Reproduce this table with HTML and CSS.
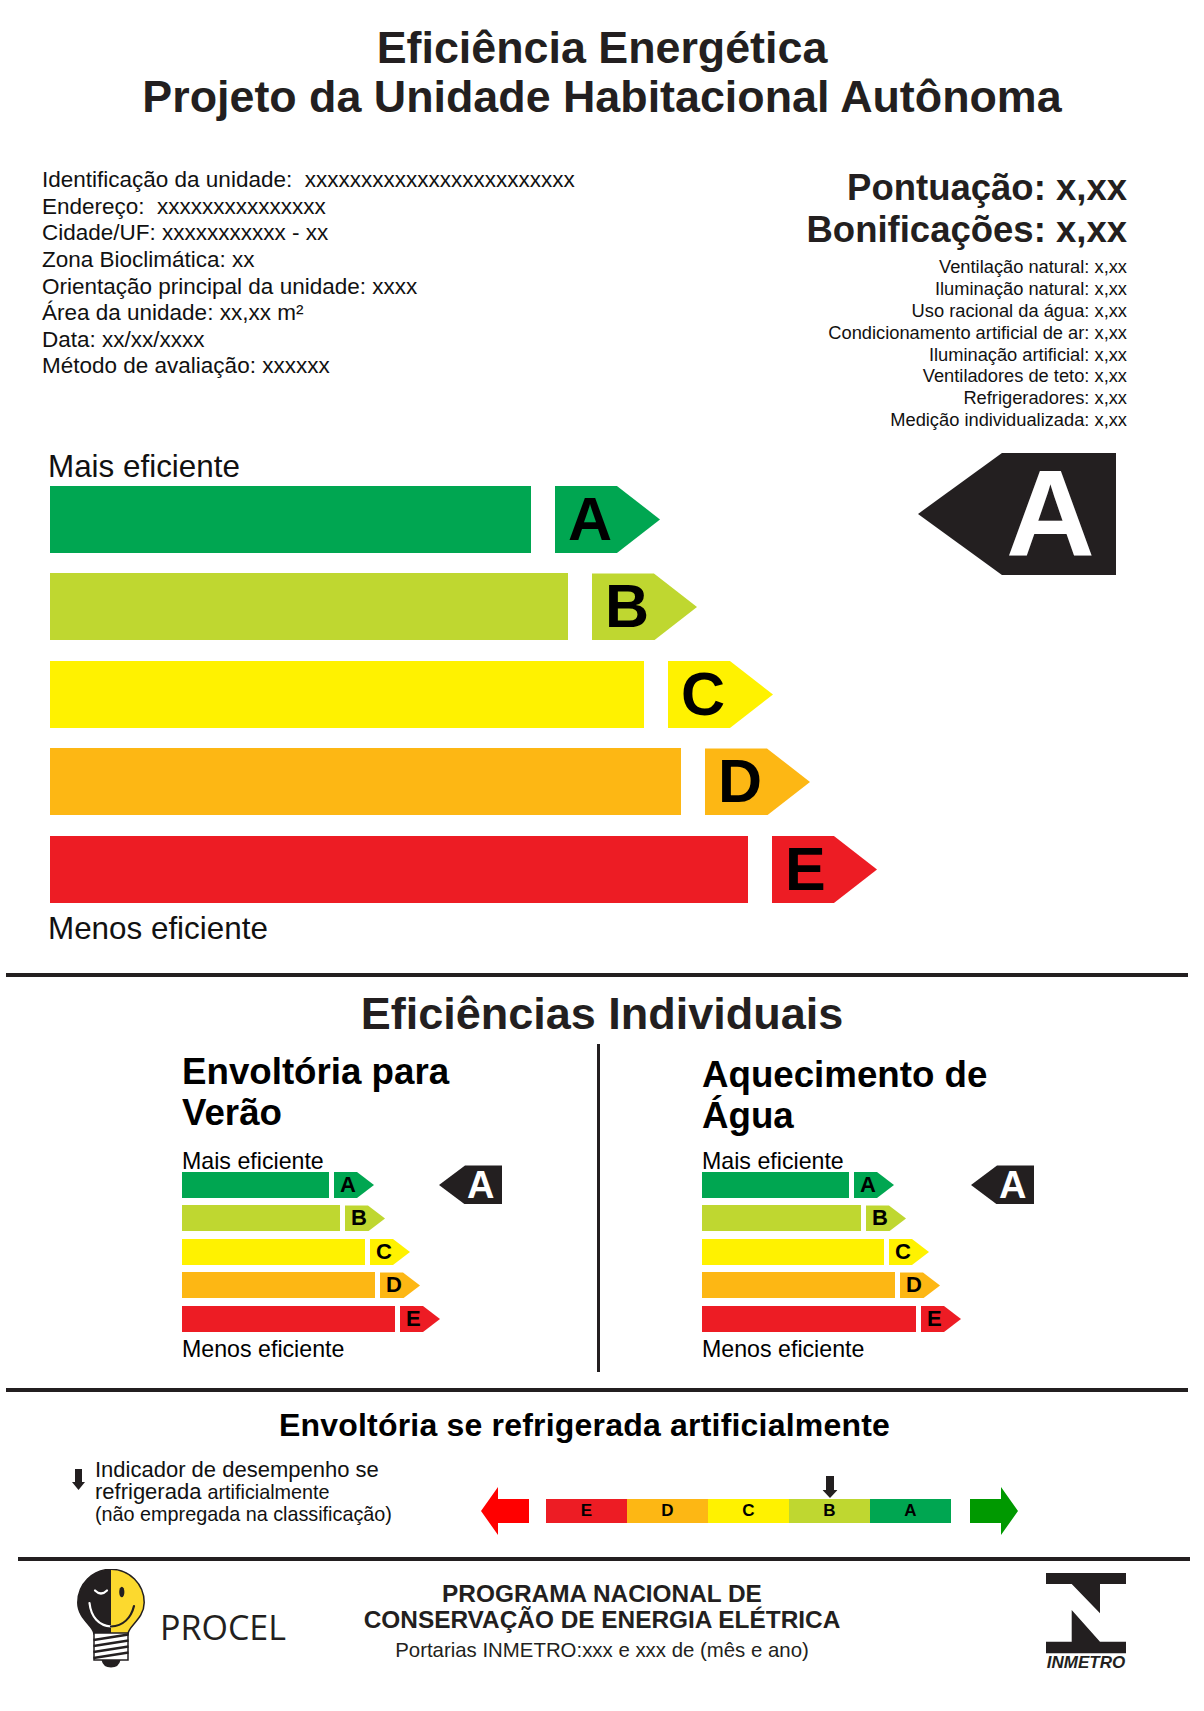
FILE: index.html
```html
<!DOCTYPE html>
<html lang="pt-BR">
<head>
<meta charset="utf-8">
<title>Eficiência Energética</title>
<link rel="stylesheet" href="styles.css">
</head>
<body>
<div class="page">
  <h1 class="title">Eficiência Energética<br>Projeto da Unidade Habitacional Autônoma</h1>

  <section class="info">
    <div class="info-left">
      <div>Identificação da unidade:&nbsp; xxxxxxxxxxxxxxxxxxxxxxxx</div>
      <div>Endereço:&nbsp; xxxxxxxxxxxxxxx</div>
      <div>Cidade/UF: xxxxxxxxxxx - xx</div>
      <div>Zona Bioclimática: xx</div>
      <div>Orientação principal da unidade: xxxx</div>
      <div>Área da unidade: xx,xx m²</div>
      <div>Data: xx/xx/xxxx</div>
      <div>Método de avaliação: xxxxxx</div>
    </div>
    <div class="info-right">
      <div class="score">Pontuação: x,xx</div>
      <div class="score">Bonificações: x,xx</div>
      <div class="bonus">
        <div>Ventilação natural: x,xx</div>
        <div>Iluminação natural: x,xx</div>
        <div>Uso racional da água: x,xx</div>
        <div>Condicionamento artificial de ar: x,xx</div>
        <div>Iluminação artificial: x,xx</div>
        <div>Ventiladores de teto: x,xx</div>
        <div>Refrigeradores: x,xx</div>
        <div>Medição individualizada: x,xx</div>
      </div>
    </div>
  </section>

  <section class="main">
    <div class="scale">
      <div class="label-big">Mais eficiente</div>
      <div class="rows">
        <div class="row"><div class="bar g-a" style="width:481px"></div><div class="arrow g-a">A</div></div>
        <div class="row"><div class="bar g-b" style="width:518px"></div><div class="arrow g-b">B</div></div>
        <div class="row"><div class="bar g-c" style="width:594px"></div><div class="arrow g-c">C</div></div>
        <div class="row"><div class="bar g-d" style="width:631px"></div><div class="arrow g-d">D</div></div>
        <div class="row"><div class="bar g-e" style="width:698px"></div><div class="arrow g-e">E</div></div>
      </div>
      <div class="label-big label-bottom">Menos eficiente</div>
    </div>
    <div class="badge">A</div>
  </section>

  <div class="sep sep-1"></div>

  <section class="individual">
    <h2 class="section-title">Eficiências Individuais</h2>
    <div class="cols">
      <div class="col col-left">
        <h3 class="col-title">Envoltória para<br>Verão</h3>
        <div class="label-small label-top-l">Mais eficiente</div>
        <div class="srows">
          <div class="srow"><div class="sbar g-a" style="width:147px"></div><div class="sarrow g-a">A</div><div class="sbadge sbadge-l">A</div></div>
          <div class="srow"><div class="sbar g-b" style="width:158px"></div><div class="sarrow g-b">B</div></div>
          <div class="srow"><div class="sbar g-c" style="width:183px"></div><div class="sarrow g-c">C</div></div>
          <div class="srow"><div class="sbar g-d" style="width:193px"></div><div class="sarrow g-d">D</div></div>
          <div class="srow"><div class="sbar g-e" style="width:213px"></div><div class="sarrow g-e">E</div></div>
        </div>
        <div class="label-small label-bottom-s">Menos eficiente</div>
      </div>
      <div class="divider"></div>
      <div class="col col-right">
        <h3 class="col-title">Aquecimento de<br>Água</h3>
        <div class="label-small label-top-r">Mais eficiente</div>
        <div class="srows">
          <div class="srow"><div class="sbar g-a" style="width:147px"></div><div class="sarrow g-a">A</div><div class="sbadge sbadge-r">A</div></div>
          <div class="srow"><div class="sbar g-b" style="width:159px"></div><div class="sarrow g-b">B</div></div>
          <div class="srow"><div class="sbar g-c" style="width:182px"></div><div class="sarrow g-c">C</div></div>
          <div class="srow"><div class="sbar g-d" style="width:193px"></div><div class="sarrow g-d">D</div></div>
          <div class="srow"><div class="sbar g-e" style="width:214px"></div><div class="sarrow g-e">E</div></div>
        </div>
        <div class="label-small label-bottom-s">Menos eficiente</div>
      </div>
    </div>
  </section>

  <div class="sep sep-2"></div>

  <section class="refrig">
    <h3 class="refrig-title">Envoltória se refrigerada artificialmente</h3>
    <div class="refrig-row">
      <div class="indicator">
        <svg class="ind-icon" width="13" height="21" viewBox="0 0 13 21"><path d="M3 0H10V13H13L6.5 21L0 13H3Z" fill="#231f20"/></svg>
        <div class="ind-text">
          <div class="ind-l1">Indicador de desempenho se</div>
          <div class="ind-l2">refrigerada <span class="ind-small">artificialmente</span></div>
          <div class="ind-l3">(não empregada na classificação)</div>
        </div>
      </div>
      <div class="rscale">
        <svg width="48" height="48" viewBox="0 0 48 48"><path d="M0 24L17 0V12H48V36H17V48Z" fill="#ff0000"/></svg>
        <div class="rbar">
          <div class="rseg g-e">E</div>
          <div class="rseg g-d">D</div>
          <div class="rseg g-c">C</div>
          <div class="rseg g-b rseg-mark">B<svg class="marker" width="15" height="22" viewBox="0 0 15 22"><path d="M3.5 0H11.5V14H15L7.5 22L0 14H3.5Z" fill="#231f20"/></svg></div>
          <div class="rseg g-a">A</div>
        </div>
        <svg width="48" height="48" viewBox="0 0 48 48"><path d="M0 12H31V0L48 24L31 48V36H0Z" fill="#009900"/></svg>
      </div>
    </div>
  </section>

  <div class="sep sep-short"></div>

  <footer class="footer">
    <div class="procel">
      <svg class="bulb" width="68" height="99" viewBox="0 0 68 99">
        <defs>
          <clipPath id="lefthalf"><rect x="0" y="0" width="34" height="70"/></clipPath>
        </defs>
        <path d="M17 65C17 57 0.8 50 0.8 33.5A33.2 33.2 0 0 1 67.2 33.5C67.2 50 51 57 51 65Z" fill="#fcd92e" stroke="#231f20" stroke-width="1.5"/>
        <path d="M17 65C17 57 0.8 50 0.8 33.5A33.2 33.2 0 0 1 67.2 33.5C67.2 50 51 57 51 65Z" fill="#231f20" clip-path="url(#lefthalf)"/>
        <path d="M18 21.5Q24 27.5 30 21.5" fill="none" stroke="#fff" stroke-width="2.2" stroke-linecap="round"/>
        <ellipse cx="44.8" cy="23" rx="2.6" ry="5.3" fill="#231f20"/>
        <path d="M12.5 34C14 48 22 57 34 57.5" fill="none" stroke="#fff" stroke-width="2.2" stroke-linecap="round"/>
        <path d="M34 57.5C46 57 54 49 57 37" fill="none" stroke="#231f20" stroke-width="2.2" stroke-linecap="round"/>
        <path d="M17 64H51V91H17Z" fill="#fff" stroke="#231f20" stroke-width="1.5"/>
        <path d="M16.5 71L51.5 65.5M16.5 77L51.5 71.5M16.5 83L51.5 77.5M16.5 89L51.5 83.5" stroke="#231f20" stroke-width="2.6"/>
        <path d="M24.5 91H43.5Q42 98.5 34 98.5Q26 98.5 24.5 91Z" fill="#231f20"/>
      </svg>
      <span class="procel-text">PROCEL</span>
    </div>
    <div class="program">
      <div class="program-title">PROGRAMA NACIONAL DE<br>CONSERVAÇÃO DE ENERGIA ELÉTRICA</div>
      <div class="program-sub">Portarias INMETRO:xxx e xxx de (mês e ano)</div>
    </div>
    <div class="inmetro">
      <svg width="80" height="81" viewBox="0 0 80 81">
        <path d="M0 0H80V11H54V40.3L25.7 11H0Z" fill="#231f20"/>
        <path d="M25.7 37L54 68.7H80V80.3H0V68.7H25.7Z" fill="#231f20"/>
      </svg>
      <div class="inmetro-text">INMETRO</div>
    </div>
  </footer>
</div>
</body>
</html>
```

FILE: styles.css
```css
html, body {
  margin: 0;
  padding: 0;
  background: #ffffff;
}

.page {
  width: 1204px;
  min-height: 1711px;
  font-family: "Liberation Sans", Arial, Helvetica, sans-serif;
  color: #231f20;
}

.title {
  margin: 0;
  padding-top: 23px;
  font-size: 44.8px;
  line-height: 49px;
  font-weight: 700;
  text-align: center;
  color: #231f20;
}

/* info block */
.info {
  display: flex;
  justify-content: space-between;
  align-items: flex-start;
  margin-top: 46.3px;
  padding: 0 77px 0 42px;
}

.info-left {
  font-size: 22.5px;
  line-height: 26.6px;
  color: #111;
}

.info-right {
  text-align: right;
}

.score {
  font-size: 36.5px;
  line-height: 41.5px;
  font-weight: 700;
  color: #231f20;
}

.bonus {
  margin-top: 6.2px;
  font-size: 18.3px;
  line-height: 21.8px;
  color: #111;
}

/* grade colours */
.g-a { background: #00a651; }
.g-b { background: #bfd730; }
.g-c { background: #fff200; }
.g-d { background: #fdb714; }
.g-e { background: #ed1c24; }

/* main scale */
.main {
  display: flex;
  align-items: flex-start;
  margin-top: 19.2px;
  padding-left: 50px;
}

.label-big {
  margin-left: -2px;
  font-size: 31.4px;
  line-height: 34px;
  color: #111;
}

.rows {
  display: flex;
  flex-direction: column;
  gap: 20.5px;
  margin-top: 1.9px;
}

.row {
  display: flex;
  align-items: center;
  height: 67px;
}

.bar {
  height: 67px;
  margin-right: 24px;
}

.arrow {
  box-sizing: border-box;
  width: 105px;
  height: 67px;
  padding-left: 13px;
  display: flex;
  align-items: center;
  clip-path: polygon(0 0, 59% 0, 100% 50%, 59% 100%, 0 100%);
  font-size: 61px;
  line-height: 1;
  font-weight: 700;
  color: #000;
}

.label-bottom {
  margin-top: 9.1px;
}

.badge {
  box-sizing: border-box;
  width: 198px;
  height: 122px;
  margin: 2.9px 88px 0 auto;
  padding-left: 88px;
  display: flex;
  align-items: center;
  background: #231f20;
  clip-path: polygon(0 50%, 42.4% 0, 100% 0, 100% 100%, 42.4% 100%);
  color: #fff;
  font-size: 123px;
  line-height: 1;
  font-weight: 700;
}

/* separators */
.sep {
  height: 4px;
  width: 1182px;
  margin-left: 6px;
  background: #231f20;
}

.sep-1 { margin-top: 26.9px; }
.sep-2 { margin-top: 16px; }

/* individual section */
.individual {
  margin-top: 13px;
}

.section-title {
  margin: 0;
  font-size: 45px;
  line-height: 47px;
  font-weight: 700;
  text-align: center;
  color: #231f20;
}

.cols {
  display: flex;
  margin-top: 7px;
}

.col {
  box-sizing: border-box;
}

.col-left {
  width: 597px;
  padding: 6.8px 0 11px 182px;
}

.col-right {
  flex: 1;
  padding: 9.8px 0 0 102px;
}

.divider {
  width: 3px;
  background: #231f20;
}

.col-title {
  margin: 0;
  font-size: 36.7px;
  line-height: 41px;
  font-weight: 700;
  color: #000;
}

.label-small {
  font-size: 23.2px;
  line-height: 22px;
  color: #000;
}

.label-top-l { margin-top: 17.2px; }
.label-top-r { margin-top: 14.2px; }

.label-bottom-s {
  margin-top: 5px;
  line-height: 24px;
}

.srows {
  display: flex;
  flex-direction: column;
  gap: 7.5px;
}

.srow {
  display: flex;
  align-items: center;
  height: 26px;
}

.sbar {
  height: 26px;
  margin-right: 5px;
}

.sarrow {
  box-sizing: border-box;
  width: 40px;
  height: 26px;
  padding-left: 6px;
  display: flex;
  align-items: center;
  clip-path: polygon(0 0, 57.5% 0, 100% 50%, 57.5% 100%, 0 100%);
  font-size: 22px;
  line-height: 1;
  font-weight: 700;
  color: #000;
}

.sbadge {
  box-sizing: border-box;
  flex: none;
  width: 63px;
  height: 39px;
  padding-left: 28px;
  display: flex;
  align-items: center;
  background: #231f20;
  clip-path: polygon(0 50%, 41.3% 0, 100% 0, 100% 100%, 41.3% 100%);
  color: #fff;
  font-size: 38px;
  line-height: 1;
  font-weight: 700;
}

.sbadge-l { margin-left: 65px; }
.sbadge-r { margin-left: 77px; }

/* refrigerated section */
.refrig-title {
  margin: 14.9px 0 0;
  padding-right: 35px;
  font-size: 32px;
  line-height: 36px;
  font-weight: 700;
  letter-spacing: 0.2px;
  text-align: center;
  color: #000;
}

.refrig-row {
  display: flex;
  align-items: flex-start;
  margin-top: 16.5px;
  padding-left: 72px;
}

.indicator {
  display: flex;
  align-items: flex-start;
  width: 409px;
  flex: none;
}

.ind-icon {
  margin-top: 9.6px;
  margin-right: 10px;
  flex: none;
}

.ind-text {
  color: #111;
}

.ind-l1,
.ind-l2 {
  font-size: 22px;
  line-height: 22px;
}

.ind-small {
  font-size: 19.8px;
  line-height: 1;
}

.ind-l3 {
  font-size: 19.8px;
  line-height: 22px;
}

.rscale {
  display: flex;
  align-items: center;
  margin-top: 27.6px;
}

.rscale svg {
  display: block;
  flex: none;
}

.rbar {
  display: flex;
  width: 405px;
  height: 24px;
  margin: 0 19px 0 17px;
}

.rseg {
  flex: 1;
  text-align: center;
  font-size: 17px;
  line-height: 24px;
  font-weight: 700;
  color: #000;
}

.rseg-mark {
  position: relative;
}

.marker {
  position: absolute;
  left: 50%;
  bottom: calc(100% + 1px);
  transform: translateX(-50%);
}

.sep-short {
  width: 1172px;
  margin-left: 18px;
  margin-top: 22px;
}

/* footer */
.footer {
  display: grid;
  grid-template-columns: 1fr auto 1fr;
  align-items: start;
}

.procel {
  display: flex;
  align-items: flex-start;
  padding: 8px 0 0 77px;
}

.bulb {
  display: block;
  flex: none;
}

.procel-text {
  margin: 38.2px 0 0 15px;
  font-family: "Open Sans", "Liberation Sans", sans-serif;
  font-size: 34px;
  line-height: 40px;
  font-weight: 400;
  color: #231f20;
}

.program {
  padding-top: 19.7px;
  text-align: center;
  color: #231f20;
}

.program-title {
  font-size: 24.4px;
  line-height: 26px;
  font-weight: 700;
}

.program-sub {
  margin-top: 5.3px;
  font-size: 20.4px;
  line-height: 24px;
}

.inmetro {
  justify-self: end;
  margin-right: 78px;
  padding-top: 12px;
  width: 80px;
}

.inmetro svg {
  display: block;
}

.inmetro-text {
  margin-top: 1.8px;
  font-size: 17px;
  line-height: 14px;
  font-weight: 700;
  font-style: italic;
  color: #231f20;
  text-align: center;
  white-space: nowrap;
}
```
